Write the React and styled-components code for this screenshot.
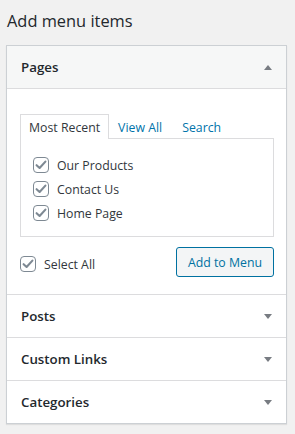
import React from "react";
import styled, { createGlobalStyle } from "styled-components";

const GlobalStyle = createGlobalStyle`
  html, body { margin: 0; padding: 0; }
  body {
    background: #f1f1f1;
    font-family: "Open Sans", "Noto Sans", sans-serif;
    color: #32373c;
    -webkit-font-smoothing: antialiased;
  }
`;

const Page = styled.div`
  padding: 6px 8px 10px 6px;
  width: 281px;
`;

const Title = styled.h2`
  margin: 0 0 10px 1px;
  font-size: 16.4px;
  font-weight: 400;
  line-height: 29px;
  color: #23282d;
`;

const Panel = styled.div`
  background: #fff;
  border: 1px solid #ccd0d4;
  box-shadow: 0 1px 1px rgba(0, 0, 0, 0.08);
`;

const Section = styled.div`
  & + & { border-top: 1px solid #dcdcde; }
`;

const Header = styled.div`
  height: 42px;
  display: flex;
  align-items: center;
  justify-content: space-between;
  padding: 0 14px 0 14px;
  background: ${(p) => (p.$open ? "#f6f7f7" : "#fff")};
  border-bottom: ${(p) => (p.$open ? "1px solid #dcdcde" : "none")};
  font-size: 13.3px;
  font-weight: 600;
  color: #23282d;
`;

const Arrow = styled.span`
  width: 0;
  height: 0;
  border-left: 4px solid transparent;
  border-right: 4px solid transparent;
  ${(p) =>
    p.$up
      ? "border-bottom: 5px solid #787c82;"
      : "border-top: 5px solid #787c82;"}
`;

const Body = styled.div`
  padding: 24px 12px 17px 13px;
`;

const Tabs = styled.div`
  display: flex;
  align-items: flex-end;
  height: 25px;
`;

const Tab = styled.div`
  height: 25px;
  box-sizing: border-box;
  padding: 0 8px 0 8px;
  display: flex;
  align-items: center;
  font-size: 12.3px;
  color: ${(p) => (p.$active ? "#32373c" : "#0073aa")};
  background: ${(p) => (p.$active ? "#fff" : "transparent")};
  border: 1px solid ${(p) => (p.$active ? "#dcdcde" : "transparent")};
  border-bottom: none;
  margin-bottom: -1px;
  margin-right: ${(p) => (p.$active ? "0" : "2px")};
  position: relative;
  z-index: 1;
`;

const TabPanel = styled.div`
  border: 1px solid #dcdcde;
  padding: 14px 12px 10px;
  box-sizing: border-box;
  height: 99px;
`;

const Item = styled.label`
  display: flex;
  align-items: center;
  height: 24px;
  gap: 8px;
  font-size: 12.3px;
  color: #32373c;
  margin-top: ${(p) => (p.$offset ? "4px" : "0")};
`;

const Box = styled.span`
  width: 16px;
  height: 16px;
  box-sizing: border-box;
  border: 1px solid #7e8993;
  border-radius: 4px;
  background: #fff;
  display: flex;
  align-items: center;
  justify-content: center;
  flex-shrink: 0;
`;

const Footer = styled.div`
  display: flex;
  align-items: center;
  justify-content: space-between;
  margin-top: 10px;
`;

const Button = styled.button`
  height: 30px;
  width: 98px;
  box-sizing: border-box;
  border: 1px solid #0071a1;
  border-radius: 3px;
  background: #f3f5f6;
  color: #0071a1;
  font-family: inherit;
  font-size: 12.3px;
  white-space: nowrap;
  padding: 0;
`;

const Check = () => (
  <Box>
    <svg width="12" height="12" viewBox="0 0 12 12">
      <path d="M1.6 6.2 L4.6 9 L10.4 2.6" fill="none" stroke="#7e8993" strokeWidth="2.1" strokeLinecap="round" strokeLinejoin="round" />
    </svg>
  </Box>
);

const sections = ["Posts", "Custom Links", "Categories"];

export default function App() {
  return (
    <>
      <GlobalStyle />
      <Page>
        <Title>Add menu items</Title>
        <Panel>
          <Section>
            <Header $open>
              Pages
              <Arrow $up />
            </Header>
            <Body>
              <Tabs>
                <Tab $active>Most Recent</Tab>
                <Tab>View All</Tab>
                <Tab>Search</Tab>
              </Tabs>
              <TabPanel>
                {["Our Products", "Contact Us", "Home Page"].map((t) => (
                  <Item key={t}>
                    <Check />
                    {t}
                  </Item>
                ))}
              </TabPanel>
              <Footer>
                <Item $offset>
                  <Check />
                  Select All
                </Item>
                <Button>Add to Menu</Button>
              </Footer>
            </Body>
          </Section>
          {sections.map((s) => (
            <Section key={s}>
              <Header>
                {s}
                <Arrow />
              </Header>
            </Section>
          ))}
        </Panel>
      </Page>
    </>
  );
}
